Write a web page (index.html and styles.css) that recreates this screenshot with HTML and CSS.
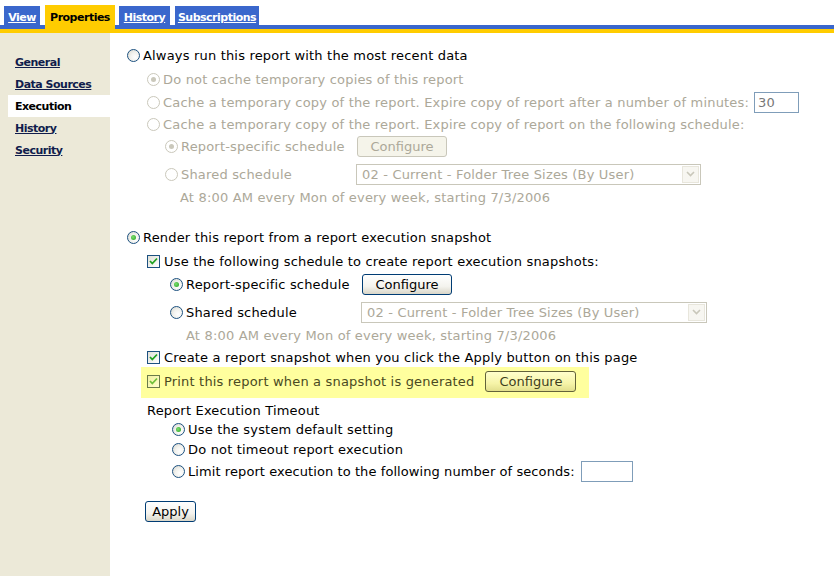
FILE: index.html
```html
<!DOCTYPE html>
<html>
<head>
<meta charset="utf-8">
<link rel="stylesheet" href="styles.css">
</head>
<body>
<div class="tabs">
  <a class="tab tab-view" href="#">View</a>
  <span class="tab tab-active">Properties</span>
  <a class="tab tab-hist" href="#">History</a>
  <a class="tab tab-subs" href="#">Subscriptions</a>
</div>
<div class="tabrule"></div>
<div class="page">
  <nav class="side">
    <a class="side-item" href="#">General</a>
    <a class="side-item" href="#">Data Sources</a>
    <span class="side-item side-current">Execution</span>
    <a class="side-item" href="#">History</a>
    <a class="side-item" href="#">Security</a>
  </nav>
  <main class="main">
    <div class="row">
      <span class="radio"></span><span class="lbl">Always run this report with the most recent data</span>
    </div>
    <div class="row dis in20 mt6">
      <span class="radio on"></span><span class="lbl">Do not cache temporary copies of this report</span>
    </div>
    <div class="row dis in20 mt5">
      <span class="radio"></span><span class="lbl">Cache a temporary copy of the report. Expire copy of report after a number of minutes:</span>
      <span class="textbox tb-min">30</span>
    </div>
    <div class="row dis in20 mt4">
      <span class="radio"></span><span class="lbl">Cache a temporary copy of the report. Expire copy of report on the following schedule:</span>
    </div>
    <div class="row dis in38 mt4">
      <span class="radio on"></span><span class="lbl col">Report-specific schedule</span>
      <span class="btn btn-dis">Configure</span>
    </div>
    <div class="row dis in38 mt10">
      <span class="radio"></span><span class="lbl col">Shared schedule</span>
      <span class="combo combo-a"><span class="combo-text">02 - Current - Folder Tree Sizes (By User)</span><span class="combo-arrow"><svg width="9" height="6" viewBox="0 0 9 6"><path d="M1 1 L4.5 4.5 L8 1" fill="none" stroke="#c9c7ba" stroke-width="1.6"/></svg></span></span>
    </div>
    <div class="row dis in53 mt5">
      <span>At 8:00 AM every Mon of every week, starting 7/3/2006</span>
    </div>

    <div class="row mt22">
      <span class="radio on"></span><span class="lbl">Render this report from a report execution snapshot</span>
    </div>
    <div class="row in20 mt6">
      <span class="check"><svg width="11" height="11" viewBox="0 0 11 11"><path d="M2 5 L4.3 7.5 L9 2.5" fill="none" stroke="#21a121" stroke-width="1.8"/></svg></span><span class="lbl lbl-c">Use the following schedule to create report execution snapshots:</span>
    </div>
    <div class="row in43 mt5">
      <span class="radio on"></span><span class="lbl col">Report-specific schedule</span>
      <span class="btn">Configure</span>
    </div>
    <div class="row in43 mt10">
      <span class="radio"></span><span class="lbl col">Shared schedule</span>
      <span class="combo combo-b dis"><span class="combo-text">02 - Current - Folder Tree Sizes (By User)</span><span class="combo-arrow"><svg width="9" height="6" viewBox="0 0 9 6"><path d="M1 1 L4.5 4.5 L8 1" fill="none" stroke="#c9c7ba" stroke-width="1.6"/></svg></span></span>
    </div>
    <div class="row dis in59 mt5">
      <span>At 8:00 AM every Mon of every week, starting 7/3/2006</span>
    </div>
    <div class="row in20 mt4">
      <span class="check"><svg width="11" height="11" viewBox="0 0 11 11"><path d="M2 5 L4.3 7.5 L9 2.5" fill="none" stroke="#21a121" stroke-width="1.8"/></svg></span><span class="lbl lbl-c">Create a report snapshot when you click the Apply button on this page</span>
    </div>
    <div class="row hl mt1">
      <span class="check check-hl"><svg width="11" height="11" viewBox="0 0 11 11"><path d="M2 5 L4.3 7.5 L9 2.5" fill="none" stroke="#6fc03a" stroke-width="1.8"/></svg></span><span class="lbl lbl-c">Print this report when a snapshot is generated</span>
      <span class="btn btn-hl">Configure</span>
    </div>
    <div class="row in20 mt3">
      <span>Report Execution Timeout</span>
    </div>
    <div class="row in45 mt1">
      <span class="radio on"></span><span class="lbl">Use the system default setting</span>
    </div>
    <div class="row in45 mt2">
      <span class="radio"></span><span class="lbl">Do not timeout report execution</span>
    </div>
    <div class="row in45 mt4">
      <span class="radio"></span><span class="lbl lbl-tight">Limit report execution to the following number of seconds:</span>
      <span class="textbox tb-sec"></span>
    </div>
    <div class="row in18 mt22">
      <span class="btn btn-apply">Apply</span>
    </div>
  </main>
</div>
</body>
</html>
```

FILE: styles.css
```css
html, body {
  margin: 0;
  padding: 0;
  background: #fff;
  font-family: "DejaVu Sans", Verdana, sans-serif;
  font-size: 13px;
  color: #000;
}

.tabs {
  display: flex;
  align-items: flex-end;
  height: 25px;
  padding-left: 4px;
  border-bottom: 4px solid #3a67cc;
}
.tab {
  display: flex;
  align-items: center;
  justify-content: center;
  box-sizing: border-box;
  height: 23px;
  margin-bottom: -4px;
  margin-right: 5px;
  background: #3a67cc;
  color: #fff;
  font-size: 11px;
  font-weight: bold;
  letter-spacing: -0.5px;
  text-decoration: underline;
}
.tab-view { width: 36px; }
.tab-hist { width: 51px; }
.tab-subs { width: 84px; }
.tab-active {
  width: 70px;
  height: 24px;
  margin-right: 4px;
  padding-top: 1px;
  background: #ffcc00;
  color: #000;
  text-decoration: none;
}
.tabrule {
  height: 4px;
  background: #ffcc00;
}

.page {
  display: flex;
  min-height: 543px;
}
.side {
  flex: none;
  width: 110px;
  background: #ece9d8;
  display: flex;
  flex-direction: column;
  padding-top: 18px;
  box-sizing: border-box;
}
.side-item {
  display: flex;
  align-items: center;
  height: 22px;
  padding-left: 7px;
  margin-left: 8px;
  font-size: 11px;
  font-weight: bold;
  letter-spacing: -0.5px;
  color: #101c4c;
  text-decoration: underline;
}
.side-current {
  background: #fff;
  color: #000;
  text-decoration: none;
}

.main {
  flex: 1;
  padding: 13px 0 0 17px;
  letter-spacing: 0.18px;
}
.row {
  display: flex;
  align-items: center;
  height: 18px;
  white-space: nowrap;
}
.dis { color: #aca899; }
.in18 { margin-left: 18px; }
.in20 { margin-left: 20px; }
.in38 { margin-left: 38px; }
.in43 { margin-left: 43px; }
.in45 { margin-left: 45px; }
.in53 { margin-left: 53px; }
.in59 { margin-left: 59px; }
.mt1 { margin-top: 1px; }
.mt2 { margin-top: 2px; }
.mt3 { margin-top: 3px; }
.mt4 { margin-top: 4px; }
.mt5 { margin-top: 5px; }
.mt6 { margin-top: 6px; }
.mt10 { margin-top: 10px; }
.mt22 { margin-top: 22px; }

.lbl { margin-left: 3px; }
.lbl-c { margin-left: 4px; }
.lbl-tight { letter-spacing: 0.08px; }
.col { width: 176px; flex: none; }

.radio {
  flex: none;
  position: relative;
  width: 13px;
  height: 13px;
  box-sizing: border-box;
  border-radius: 50%;
  border: 1px solid #1c5180;
  background: radial-gradient(circle at 65% 65%, #ffffff 0%, #f2f2ee 45%, #d4d4cc 100%);
}
.radio.on::after {
  content: "";
  position: absolute;
  left: 3px;
  top: 3px;
  width: 5px;
  height: 5px;
  border-radius: 50%;
  background: radial-gradient(circle at 40% 40%, #7ede6e, #21a121);
}
.dis .radio {
  border-color: #cac8bb;
  background: #fff;
}
.dis .radio.on::after {
  background: #cac8bb;
}

.check {
  flex: none;
  display: flex;
  align-items: center;
  justify-content: center;
  width: 13px;
  height: 13px;
  box-sizing: border-box;
  border: 1px solid #1c5180;
  background: linear-gradient(135deg, #e0e0d8, #ffffff);
}
.check-hl {
  border-color: #6a7a4a;
  background: linear-gradient(135deg, #f0f0a0, #ffffcc);
}

.btn {
  flex: none;
  display: flex;
  align-items: center;
  justify-content: center;
  box-sizing: border-box;
  width: 90px;
  height: 21px;
  border: 1px solid #003c74;
  border-radius: 3px;
  background: linear-gradient(#ffffff, #f4f3ee 60%, #d9d6c8);
  color: #000;
  letter-spacing: 0;
}
.btn-dis {
  border-color: #c9c7ba;
  background: #f5f4ea;
  color: #aca899;
}
.btn-hl {
  width: 91px;
  margin-left: 11px;
  border-color: #62623a;
  background: linear-gradient(#ffffcc, #f6f4a8 60%, #e2df8c);
  color: #3e3e1e;
}
.btn-apply {
  width: 51px;
}

.textbox {
  flex: none;
  display: flex;
  align-items: center;
  box-sizing: border-box;
  height: 21px;
  border: 1px solid #7f9db9;
  background: #fff;
  padding-left: 3px;
}
.tb-min {
  width: 45px;
  margin-left: 5px;
  color: #777;
}
.tb-sec {
  width: 52px;
  margin-left: 6px;
}

.combo {
  flex: none;
  display: flex;
  align-items: center;
  box-sizing: border-box;
  height: 21px;
  border: 1px solid #c9c7ba;
  background: #fff;
  padding: 1px 1px 1px 5px;
  color: #aca899;
}
.combo-a { width: 345px; margin-left: -1px; }
.combo-b { width: 346px; margin-left: -1px; }
.combo-text { flex: 1; }
.combo-arrow {
  flex: none;
  display: flex;
  align-items: center;
  justify-content: center;
  width: 17px;
  height: 17px;
  box-sizing: border-box;
  border: 1px solid #e8e6dc;
  background: #f7f6f1;
}

.hl {
  height: 31px;
  width: 448px;
  box-sizing: border-box;
  margin-left: 14px;
  padding: 0 0 3px 6px;
  background: #ffff9e;
  color: #4a4a22;
}
```
